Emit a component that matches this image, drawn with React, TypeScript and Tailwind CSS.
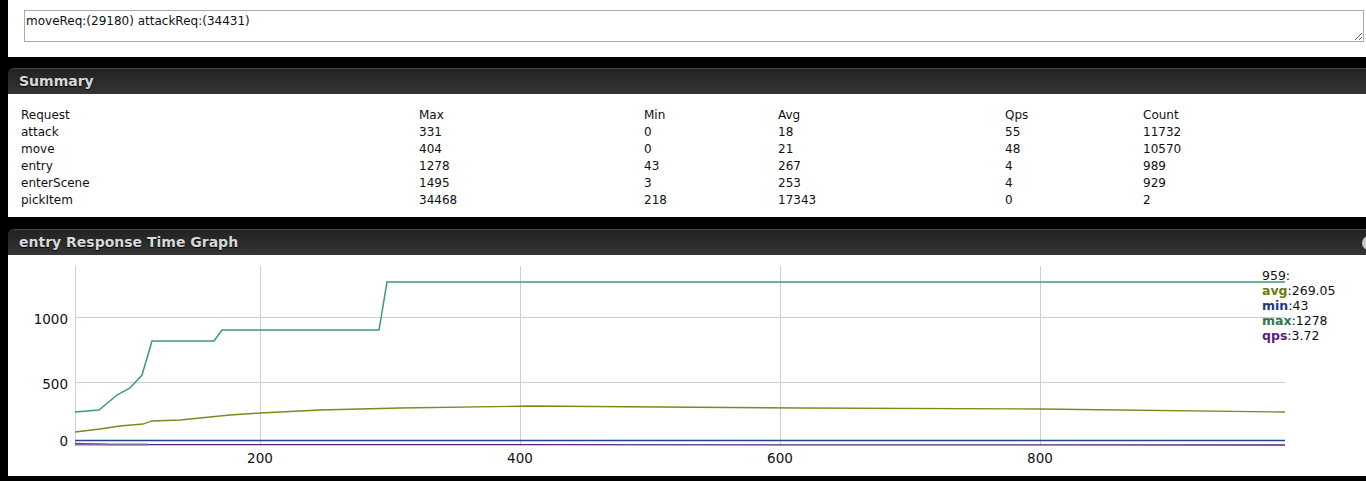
import React from "react";

const FONT = { fontFamily: '"DejaVu Sans", Verdana, sans-serif' };

const rows = [
  ["Request", "Max", "Min", "Avg", "Qps", "Count"],
  ["attack", "331", "0", "18", "55", "11732"],
  ["move", "404", "0", "21", "48", "10570"],
  ["entry", "1278", "43", "267", "4", "989"],
  ["enterScene", "1495", "3", "253", "4", "929"],
  ["pickItem", "34468", "218", "17343", "0", "2"],
];

// column widths, so the cells start where the reference has them
const COLS = ["w-[398px]", "w-[225px]", "w-[134px]", "w-[227px]", "w-[138px]", "flex-1"];

const maxPts: [number, number][] = [
  [67, 157], [91, 155], [109, 140], [122, 133], [134, 120], [144, 86],
  [206, 86], [214, 75], [371, 75], [379, 27], [1277, 27],
];

const avgPts: [number, number][] = [
  [67, 177], [92, 174], [112, 171], [135, 169], [144, 166], [172, 165],
  [192, 163], [222, 160], [252, 158], [312, 155], [392, 153], [522, 151],
  [652, 152], [792, 153], [1032, 154], [1277, 157],
];

const toPath = (pts: [number, number][]) =>
  pts.map(([x, y], i) => `${i ? "L" : "M"}${x} ${y}`).join(" ");

function PanelHeader({ title, knob }: { title: string; knob?: boolean }) {
  return (
    <div className="flex h-[26px] items-center overflow-hidden rounded-tl-[6px] border-t border-[#444] bg-gradient-to-b from-[#222] to-[#353535] pl-[11px]">
      <span
        className="text-[14px] font-bold text-[#d8d8d8] [text-shadow:0_1px_1px_#000]"
        style={FONT}
      >
        {title}
      </span>
      {knob && <span className="ml-auto mr-[-10px] h-[14px] w-[14px] rounded-full bg-[#c8c8c8]" />}
    </div>
  );
}

function Graph() {
  return (
    <div className="relative h-[221px] bg-white">
      <svg width="1358" height="221" className="block" style={FONT}>
        {[62, 127].map((y) => (
          <line key={y} x1="67" x2="1277" y1={y + 0.5} y2={y + 0.5} stroke="#cfcfcf" />
        ))}
        {[67, 252, 512, 772, 1032].map((x) => (
          <line key={x} x1={x + 0.5} x2={x + 0.5} y1="11" y2="191" stroke="#cfcfcf" />
        ))}
        <text x="60" y="69" fontSize="13.5" textAnchor="end" fill="#111">1000</text>
        <text x="60" y="134" fontSize="13.5" textAnchor="end" fill="#111">500</text>
        <text x="60" y="191" fontSize="13.5" textAnchor="end" fill="#111">0</text>
        {[
          [252, "200"],
          [512, "400"],
          [772, "600"],
          [1032, "800"],
        ].map(([x, t]) => (
          <text key={t} x={x} y="208" fontSize="13.5" textAnchor="middle" fill="#111">
            {t}
          </text>
        ))}
        <path d={toPath(avgPts)} fill="none" stroke="#7a8a1c" strokeWidth="1.3" />
        <path d={toPath(maxPts)} fill="none" stroke="#3e9c6c" strokeWidth="1.5" />
        <line x1="67" x2="1277" y1="185.5" y2="185.5" stroke="#24468f" strokeWidth="1.3" />
        <path d="M67 188.5 L100 189.5 L1277 190" fill="none" stroke="#5b2670" strokeWidth="1.3" />
        <line x1="67" x2="140" y1="189.5" y2="189.5" stroke="#8a6a9a" strokeWidth="2" />
      </svg>
      <div className="absolute left-[1254px] top-[13px] text-[12.5px] leading-[15px] text-[#111]" style={FONT}>
        <div>959:</div>
        <div>
          <b className="text-[#6b7b0e]">avg</b>:269.05
        </div>
        <div>
          <b className="text-[#1d3a7c]">min</b>:43
        </div>
        <div>
          <b className="text-[#2a7a4c]">max</b>:1278
        </div>
        <div>
          <b className="text-[#5a1f78]">qps</b>:3.72
        </div>
      </div>
    </div>
  );
}

export default function App() {
  return (
    <div className="h-[481px] overflow-hidden bg-black">
      <div className="ml-[8px] h-[57px] bg-white pl-[16px] pt-[10px]">
        <textarea
          readOnly
          defaultValue="moveReq:(29180) attackReq:(34431)"
          className="block h-[32px] w-[1340px] resize border border-[#aaa] px-[1px] pt-[3px] text-[12px] leading-[15px] text-[#111] outline-none"
          style={FONT}
        />
      </div>

      <div className="ml-[8px] mt-[11px]">
        <PanelHeader title="Summary" />
        <div className="h-[123px] bg-white pl-[13px] pt-[13px] text-[12px] leading-[17px] text-[#111]" style={FONT}>
          {rows.map((r) => (
            <div key={r[0]} className="flex">
              {r.map((c, i) => (
                <div key={i} className={COLS[i]}>
                  {c}
                </div>
              ))}
            </div>
          ))}
        </div>
      </div>

      <div className="ml-[8px] mt-[12px]">
        <PanelHeader title="entry Response Time Graph" knob />
        <Graph />
      </div>
    </div>
  );
}
